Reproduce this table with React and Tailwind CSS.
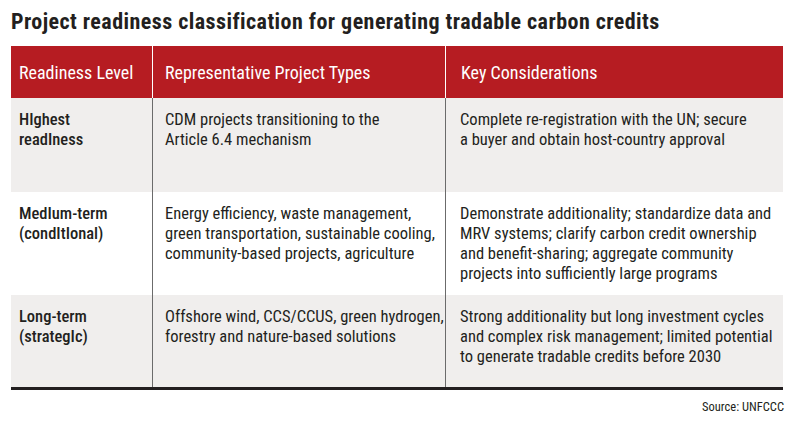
const rows = [
  {
    level: ['HIghest', 'readIness'],
    types: ['CDM projects transitioning to the', 'Article 6.4 mechanism'],
    notes: ['Complete re-registration with the UN; secure', 'a buyer and obtain host-country approval'],
    bg: 'bg-[#f0eeed]',
    h: 'h-[94px]',
  },
  {
    level: ['MedIum-term', '(condItIonal)'],
    types: [
      'Energy efficiency, waste management,',
      'green transportation, sustainable cooling,',
      'community-based projects, agriculture',
    ],
    notes: [
      'Demonstrate additionality; standardize data and',
      'MRV systems; clarify carbon credit ownership',
      'and benefit-sharing; aggregate community',
      'projects into sufficiently large programs',
    ],
    bg: 'bg-white',
    h: 'h-[103px]',
  },
  {
    level: ['Long-term', '(strategIc)'],
    types: ['Offshore wind, CCS/CCUS, green hydrogen,', 'forestry and nature-based solutions'],
    notes: [
      'Strong additionality but long investment cycles',
      'and complex risk management; limited potential',
      'to generate tradable credits before 2030',
    ],
    bg: 'bg-[#f0eeed]',
    h: 'h-[92px]',
  },
];

function Lines({ items }) {
  return items.map((l) => (
    <div key={l} className="whitespace-nowrap">
      {l}
    </div>
  ));
}

export default function App() {
  return (
    <div className="w-[795px] h-[421px] bg-white px-[11px] pt-[8px] font-['Roboto',sans-serif] font-stretch-condensed text-[#231f20]">
      <h1 className="text-[22px] leading-[28px] font-bold tracking-[0.45px] whitespace-nowrap">
        Project readiness classification for generating tradable carbon credits
      </h1>

      <div className="mt-[10px] w-[772px] border-b-[3px] border-[#231f20]">
        <div className="grid grid-cols-[141px_293px_338px] h-[52px] bg-[#b61c22] text-white text-[18px]">
          <div className="flex items-center pl-2">Readiness Level</div>
          <div className="flex items-center pl-3 border-l border-white">Representative Project Types</div>
          <div className="flex items-center pl-[15px] border-l border-white">Key Considerations</div>
        </div>

        {rows.map((row, i) => (
          <div key={i} className={`grid grid-cols-[141px_293px_338px] ${row.h} ${row.bg} text-[16.5px] leading-[20px]`}>
            <div className="pl-2 pt-[12px] font-medium">
              <Lines items={row.level} />
            </div>
            <div className="pl-3 pt-[12px] border-l border-[#6b6b6b]">
              <Lines items={row.types} />
            </div>
            <div className="pl-[14px] pt-[12px] border-l border-[#6b6b6b]">
              <Lines items={row.notes} />
            </div>
          </div>
        ))}
      </div>

      <div className="mt-[9px] text-right text-[12.5px] leading-4">Source: UNFCCC</div>
    </div>
  );
}
